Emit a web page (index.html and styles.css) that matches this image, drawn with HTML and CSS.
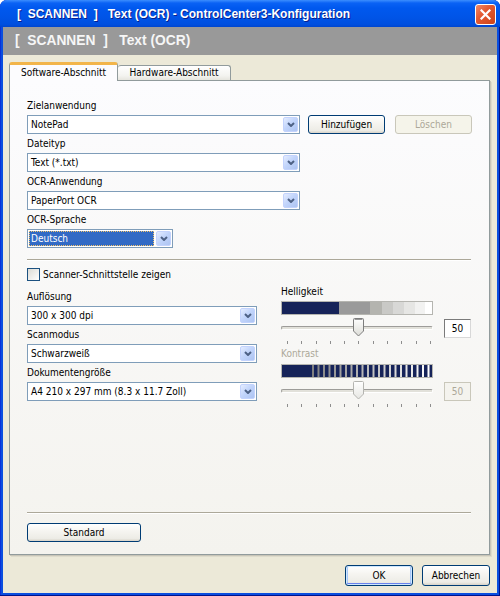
FILE: index.html
```html
<!DOCTYPE html>
<html lang="de">
<head>
<meta charset="utf-8">
<title>ControlCenter3-Konfiguration</title>
<link rel="stylesheet" href="styles.css">
</head>
<body>
<div class="window">
  <div class="titlebar">
    <span class="title">[  SCANNEN  ]   Text (OCR) - ControlCenter3-Konfiguration</span>
    <span class="close"><svg width="11" height="11" viewBox="0 0 11 11"><path d="M1.5 1.5 L9.5 9.5 M9.5 1.5 L1.5 9.5" stroke="#fff" stroke-width="2.2" stroke-linecap="square"/></svg></span>
  </div>
  <div class="client">
    <div class="header">[  SCANNEN  ]   Text (OCR)</div>
    <div class="tabs">
      <div class="tab active">Software-Abschnitt</div>
      <div class="tab">Hardware-Abschnitt</div>
    </div>
    <div class="panel">
      <div class="lbl">Zielanwendung</div>
      <div class="row">
        <div class="combo w273"><span class="val">NotePad</span><span class="dd"><svg width="8" height="5" viewBox="0 0 8 5"><path d="M1 1 L4 4 L7 1" fill="none" stroke="#4D6185" stroke-width="2"/></svg></span></div>
        <button class="btn add">Hinzufügen</button>
        <button class="btn del" disabled>Löschen</button>
      </div>
      <div class="lbl">Dateityp</div>
      <div class="combo w273"><span class="val">Text (*.txt)</span><span class="dd"><svg width="8" height="5" viewBox="0 0 8 5"><path d="M1 1 L4 4 L7 1" fill="none" stroke="#4D6185" stroke-width="2"/></svg></span></div>
      <div class="lbl">OCR-Anwendung</div>
      <div class="combo w273"><span class="val">PaperPort OCR</span><span class="dd"><svg width="8" height="5" viewBox="0 0 8 5"><path d="M1 1 L4 4 L7 1" fill="none" stroke="#4D6185" stroke-width="2"/></svg></span></div>
      <div class="lbl">OCR-Sprache</div>
      <div class="combo w146"><span class="val sel">Deutsch</span><span class="dd"><svg width="8" height="5" viewBox="0 0 8 5"><path d="M1 1 L4 4 L7 1" fill="none" stroke="#4D6185" stroke-width="2"/></svg></span></div>

      <div class="sep first"></div>

      <label class="check"><span class="box"></span>Scanner-Schnittstelle zeigen</label>

      <div class="cols">
        <div class="leftcol">
          <div class="lbl">Auflösung</div>
          <div class="combo w230"><span class="val">300 x 300 dpi</span><span class="dd"><svg width="8" height="5" viewBox="0 0 8 5"><path d="M1 1 L4 4 L7 1" fill="none" stroke="#4D6185" stroke-width="2"/></svg></span></div>
          <div class="lbl">Scanmodus</div>
          <div class="combo w230"><span class="val">Schwarzweiß</span><span class="dd"><svg width="8" height="5" viewBox="0 0 8 5"><path d="M1 1 L4 4 L7 1" fill="none" stroke="#4D6185" stroke-width="2"/></svg></span></div>
          <div class="lbl">Dokumentengröße</div>
          <div class="combo w230"><span class="val">A4 210 x 297 mm (8.3 x 11.7 Zoll)</span><span class="dd"><svg width="8" height="5" viewBox="0 0 8 5"><path d="M1 1 L4 4 L7 1" fill="none" stroke="#4D6185" stroke-width="2"/></svg></span></div>
        </div>
        <div class="rightcol">
          <div class="slbl">Helligkeit</div>
          <div class="sgroup">
            <div class="sarea">
              <svg class="bar" width="152" height="14" viewBox="0 0 152 14">
                <rect x="0.5" y="0.5" width="151" height="13" fill="#fff" stroke="#B5B5B0"/>
                <rect x="1" y="1" width="57" height="12" fill="#162359"/>
                <rect x="58" y="1" width="31" height="12" fill="#9A9A9A"/>
                <rect x="89" y="1" width="12" height="12" fill="#B4B4AF"/>
                <rect x="101" y="1" width="11" height="12" fill="#C9C9C6"/>
                <rect x="112" y="1" width="11" height="12" fill="#D8D8D6"/>
                <rect x="123" y="1" width="11" height="12" fill="#E6E6E4"/>
                <rect x="134" y="1" width="10" height="12" fill="#F2F2F1"/>
              </svg>
              <div class="track">
                <div class="line"></div>
                <svg class="thumb" width="11" height="19" viewBox="0 0 11 19"><defs><linearGradient id="tg" x1="0" y1="0" x2="0" y2="1"><stop offset="0" stop-color="#FFFFFF"/><stop offset="1" stop-color="#DCDCD6"/></linearGradient></defs><path d="M0.5 1.5 Q0.5 0.5 1.5 0.5 L9.5 0.5 Q10.5 0.5 10.5 1.5 L10.5 13 L5.5 18 L0.5 13 Z" fill="url(#tg)" stroke="#7D7D7D"/><path d="M1.5 1.5 L9.5 1.5" stroke="#9A9A9A"/></svg>
              </div>
              <div class="ticks"><i></i><i></i><i></i><i></i><i></i><i></i><i></i><i></i><i></i><i></i><i></i></div>
            </div>
            <div class="vbox">50</div>
          </div>
          <div class="slbl dis">Kontrast</div>
          <div class="sgroup">
            <div class="sarea">
              <svg class="bar" width="152" height="14" viewBox="0 0 152 14">
                <rect x="0.5" y="0.5" width="151" height="13" fill="#162359" stroke="#B5B5B0"/>
                <g>
                  <rect x="31" y="1" width="2" height="12" fill="#808080"/>
                  <rect x="36.5" y="1" width="2" height="12" fill="#868686"/>
                  <rect x="42" y="1" width="2" height="12" fill="#8C8C8C"/>
                  <rect x="47.5" y="1" width="2" height="12" fill="#929292"/>
                  <rect x="53" y="1" width="2" height="12" fill="#989898"/>
                  <rect x="58.5" y="1" width="2" height="12" fill="#9E9E9E"/>
                  <rect x="64" y="1" width="2" height="12" fill="#A4A4A4"/>
                  <rect x="69.5" y="1" width="2" height="12" fill="#AAAAAA"/>
                  <rect x="75" y="1" width="2" height="12" fill="#B0B0B0"/>
                  <rect x="80.5" y="1" width="2" height="12" fill="#B6B6B6"/>
                  <rect x="86" y="1" width="2" height="12" fill="#BCBCBC"/>
                  <rect x="91.5" y="1" width="2" height="12" fill="#C2C2C2"/>
                  <rect x="97" y="1" width="2" height="12" fill="#C8C8C8"/>
                  <rect x="102.5" y="1" width="2" height="12" fill="#CECECE"/>
                  <rect x="108" y="1" width="2" height="12" fill="#D4D4D4"/>
                  <rect x="113.5" y="1" width="2" height="12" fill="#DADADA"/>
                  <rect x="119" y="1" width="2" height="12" fill="#E0E0E0"/>
                  <rect x="124.5" y="1" width="2" height="12" fill="#E6E6E6"/>
                  <rect x="130" y="1" width="2" height="12" fill="#ECECEC"/>
                  <rect x="135.5" y="1" width="2" height="12" fill="#F2F2F2"/>
                  <rect x="141" y="1" width="2" height="12" fill="#F8F8F8"/>
                  <rect x="146.5" y="1" width="2" height="12" fill="#FFFFFF"/>
                </g>
              </svg>
              <div class="track">
                <div class="line"></div>
                <svg class="thumb" width="11" height="19" viewBox="0 0 11 19"><defs><linearGradient id="tg2" x1="0" y1="0" x2="0" y2="1"><stop offset="0" stop-color="#FFFFFF"/><stop offset="1" stop-color="#E6E6E2"/></linearGradient></defs><path d="M0.5 1.5 Q0.5 0.5 1.5 0.5 L9.5 0.5 Q10.5 0.5 10.5 1.5 L10.5 13 L5.5 18 L0.5 13 Z" fill="url(#tg2)" stroke="#B4B4B0"/></svg>
              </div>
              <div class="ticks"><i></i><i></i><i></i><i></i><i></i><i></i><i></i><i></i><i></i><i></i><i></i></div>
            </div>
            <div class="vbox dis">50</div>
          </div>
        </div>
      </div>

      <div class="sep last"></div>
      <div class="row">
        <button class="btn std">Standard</button>
      </div>
    </div>
    <div class="dlgbtns">
      <button class="btn ok">OK</button>
      <button class="btn cancel">Abbrechen</button>
    </div>
  </div>
</div>
</body>
</html>
```

FILE: styles.css
```css
html, body {
  margin: 0;
  padding: 0;
  background: #ffffff;
}

body {
  font-family: "DejaVu Sans Condensed", "DejaVu Sans", sans-serif;
  font-stretch: condensed;
  font-size: 10px;
  color: #000;
}

.window {
  width: 500px;
  height: 596px;
  display: flex;
  flex-direction: column;
  background: #0A4EDF;
  border-radius: 7px 7px 0 0;
  box-sizing: border-box;
  box-shadow: inset 0 -1px 0 #00138C, inset 1px 0 0 #0831D9, inset -1px 0 0 #00138C;
}

.titlebar {
  height: 27px;
  flex: none;
  display: flex;
  align-items: center;
  justify-content: space-between;
  padding: 0 4px 0 17px;
  border-radius: 7px 7px 0 0;
  background: linear-gradient(#3C8EFE 0, #0A62F5 3px, #0058EE 8px, #0055E8 60%, #004FDF 90%, #0046CF 100%);
}

.title {
  font-family: "Liberation Sans", Arial, sans-serif;
  font-stretch: normal;
  color: #fff;
  font-weight: bold;
  font-size: 12px;
  white-space: pre;
  text-shadow: 1px 1px 0 #0A1E8C;
  margin-top: 1px;
}

.close {
  width: 19px;
  height: 19px;
  margin-top: 2px;
  border: 1px solid #fff;
  border-radius: 3px;
  background: linear-gradient(135deg, #F08A6A 0, #E35A33 40%, #CF4418 100%);
  display: flex;
  align-items: center;
  justify-content: center;
}

.client {
  flex: 1;
  margin: 0 3px 3px;
  background: #ECE9D8;
  display: flex;
  flex-direction: column;
}

.header {
  font-family: "Liberation Sans", Arial, sans-serif;
  font-stretch: normal;
  height: 28px;
  flex: none;
  background: #999999;
  color: #F6F6F6;
  font-size: 13.8px;
  font-weight: bold;
  line-height: 28px;
  padding-left: 12px;
  white-space: pre;
}

.tabs {
  display: flex;
  align-items: flex-end;
  margin: 7px 0 0 6px;
  height: 18px;
  position: relative;
  z-index: 2;
}

.tab {
  box-sizing: border-box;
  text-align: center;
  border: 1px solid #919B9C;
  border-bottom: none;
  border-radius: 3px 3px 0 0;
}

.tab.active {
  width: 109px;
  height: 19px;
  margin-bottom: -1px;
  background: #FCFCFE;
  border-top: 3px solid #F2B54A;
  line-height: 14px;
  padding-top: 1px;
}

.tab:not(.active) {
  width: 113px;
  height: 15px;
  background: linear-gradient(#FFFFFF, #F3F3EF 70%, #E6E5DE);
  line-height: 14px;
  border-left: none;
}

.panel {
  margin-left: 6px;
  width: 481px;
  height: 475px;
  box-sizing: border-box;
  border: 1px solid #919B9C;
  box-shadow: 1px 1px 0 #C8C5B8, 2px 2px 0 #DEDBCB;
  background: linear-gradient(#FCFCFE, #F4F3EE);
  padding: 15px 0 12px 17px;
  display: flex;
  flex-direction: column;
  flex: none;
}

.lbl {
  height: 19px;
  line-height: 19px;
}

.row {
  display: flex;
  align-items: flex-start;
}

.combo {
  height: 19px;
  box-sizing: border-box;
  border: 1px solid #7F9DB9;
  background: #fff;
  display: flex;
  align-items: center;
  flex: none;
}

.w273 { width: 273px; }
.w146 { width: 146px; }
.w230 { width: 230px; }

.val {
  flex: 1;
  padding-left: 3px;
  line-height: 15px;
  white-space: nowrap;
  overflow: hidden;
}

.val.sel {
  background: #316AC5;
  color: #fff;
  margin: 0 1px 0 1px;
  padding-left: 2px;
  outline: 1px dotted #F2C46A;
  outline-offset: -1px;
}

.dd {
  width: 15px;
  height: 15px;
  margin: 0 1px 0 1px;
  border: 1px solid #C3D3FD;
  border-radius: 2px;
  box-sizing: border-box;
  background: linear-gradient(135deg, #E5EDFF 0, #C2D5FB 45%, #ADC4F2 100%);
  display: flex;
  align-items: center;
  justify-content: center;
}

.btn {
  font-family: "DejaVu Sans Condensed", "DejaVu Sans", sans-serif;
  font-stretch: condensed;
  font-size: 10px;
  color: #000;
  box-sizing: border-box;
  border: 1px solid #003C74;
  border-radius: 3px;
  background: linear-gradient(#FFFFFF 0, #F6F5F1 40%, #EDECE6 85%, #D8D3C8 100%);
  padding: 0;
  margin: 0;
  height: 19px;
}

.btn.add { width: 77px; margin-left: 8px; }
.btn.del {
  width: 77px;
  margin-left: 10px;
  border-color: #C9C7BA;
  background: #F5F4EA;
  color: #ACA899;
}

.sep {
  height: 1px;
  width: 444px;
  background: #ACA899;
  box-shadow: 0 1px 0 #fff;
  flex: none;
}

.sep.first { margin-top: 11px; }
.sep.last { margin-top: auto; }

.check {
  display: flex;
  align-items: center;
  margin-top: 8px;
  height: 13px;
}

.box {
  width: 13px;
  height: 13px;
  box-sizing: border-box;
  border: 1px solid #1C5180;
  background: linear-gradient(135deg, #DCDBD5, #FFFFFF);
  margin-right: 3px;
}

.cols {
  display: flex;
  margin-top: 6px;
  gap: 24px;
}

.leftcol {
  width: 230px;
}

.rightcol {
  width: 190px;
}

.slbl {
  line-height: 14px;
  height: 14px;
  margin-top: -2px;
  color: #000;
}

.slbl.dis {
  color: #ACA899;
  margin-top: 2px;
}

.sgroup {
  display: flex;
  align-items: flex-start;
  gap: 11px;
}

.sarea {
  width: 152px;
}

.bar {
  display: block;
  margin-top: 2px;
  width: 152px;
  height: 14px;
}

.rightcol .sgroup + .slbl.dis + .sgroup .bar {
  margin-top: 3px;
}

.track {
  position: relative;
  height: 23px;
}

.line {
  position: absolute;
  left: 0;
  top: 11px;
  width: 152px;
  height: 4px;
  box-sizing: border-box;
  border: 1px solid;
  border-color: #9D9C99 #FFFFFF #FFFFFF #9D9C99;
  background: #E2E1DA;
  border-radius: 2px;
}

.thumb {
  position: absolute;
  left: 72px;
  top: 3px;
}

.ticks {
  display: flex;
  justify-content: space-between;
  width: 144px;
  margin: 3px 0 0 6px;
  height: 4px;
}

.ticks i {
  display: block;
  width: 1px;
  height: 3px;
  background: #8E8E8E;
}

.vbox {
  margin-top: 20px;
  width: 27px;
  height: 19px;
  box-sizing: border-box;
  border: 1px solid;
  border-color: #7A7A7A #D8D8D8 #D8D8D8 #7A7A7A;
  background: #fff;
  text-align: center;
  line-height: 17px;
}

.vbox.dis {
  color: #ACA899;
  border-color: #C9C7BA;
  background: #F4F3EE;
}

.rightcol .sgroup + .slbl.dis + .sgroup .vbox {
  margin-top: 21px;
}

.btn.std {
  width: 114px;
  margin-top: 10px;
}

.dlgbtns {
  display: flex;
  justify-content: flex-end;
  gap: 9px;
  padding-right: 7px;
  margin-top: 10px;
}

.btn.ok, .btn.cancel {
  width: 68px;
  height: 21px;
}

.btn.ok {
  box-shadow: inset 0 0 0 1px #CEE7FF, inset 0 -2px 0 0 #6982EE, inset 2px 0 0 0 #A9C8F8, inset -2px 0 0 0 #A9C8F8;
}
```
